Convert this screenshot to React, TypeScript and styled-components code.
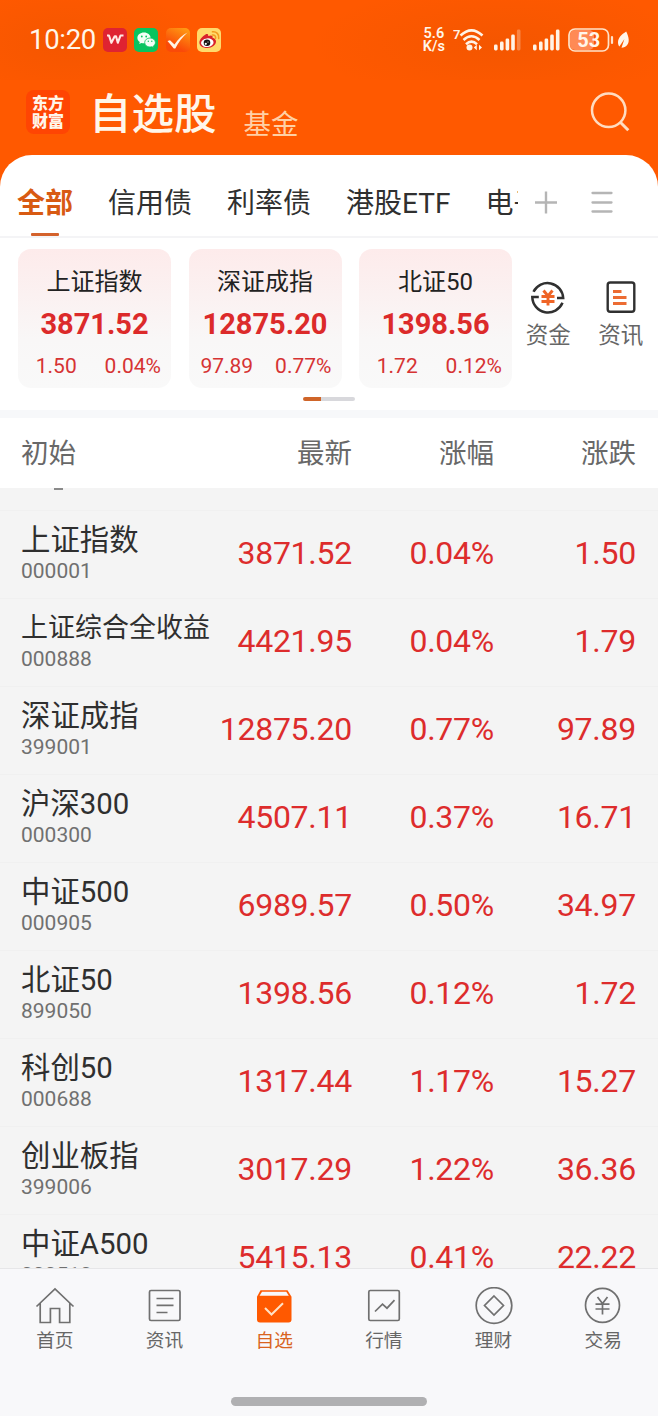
import React from 'react';
import styled, { createGlobalStyle } from 'styled-components';

const GlobalStyle = createGlobalStyle`
  * { box-sizing: border-box; }
  body {
    margin: 0;
    background: #f4f4f4;
    font-family: Roboto, "Noto Sans CJK SC", sans-serif;
    color: #2f2f2f;
  }
  svg { display: block; flex: none; }
`;

const Screen = styled.div`
  width: 658px;
  height: 1416px;
  display: flex;
  flex-direction: column;
  overflow: hidden;
  background: #f4f4f4;
`;

const Top = styled.header`
  height: 155px;
  flex: none;
  background: #ff5900;
  color: #fff6ea;
`;

const StatusBar = styled.div`
  height: 80px;
  display: flex;
  align-items: center;
  padding: 0 28px 0 29px;
  background:
    radial-gradient(ellipse 130px 60px at 70px 44px, rgba(150, 60, 0, 0.1), transparent),
    radial-gradient(ellipse 190px 60px at 500px 44px, rgba(150, 60, 0, 0.1), transparent);
`;

const Clock = styled.span`
  width: 74px;
  font-size: 27.5px;
  line-height: 32px;
  letter-spacing: -0.3px;
`;

const AppIcons = styled.div`
  display: flex;
  gap: 7.4px;
`;

const StatusRight = styled.div`
  display: flex;
  align-items: center;
  margin-left: auto;
`;

const Speed = styled.div`
  font-size: 14.5px;
  font-weight: 600;
  line-height: 13px;
  text-align: center;
  margin-right: 8px;
`;

const TitleBar = styled.div`
  height: 75px;
  display: flex;
  align-items: flex-start;
  padding: 0 26px;
`;

const Brand = styled.div`
  width: 44px;
  height: 44px;
  margin-top: 10px;
  border-radius: 8px;
  background: #ff4503;
  font: 900 16px/18px "Noto Sans CJK SC", sans-serif;
  text-align: center;
  padding-top: 3px;
`;

const PageTitle = styled.h1`
  margin: 12px 0 0 19px;
  font-size: 42.5px;
  line-height: 46px;
  font-weight: 500;
`;

const AltTitle = styled.span`
  margin: 28px auto 0 27px;
  font-size: 27.5px;
  line-height: 34px;
  color: #ffd0a5;
`;

const SearchButton = styled.div`
  margin: 11px 2px 0 0;
`;

const Sheet = styled.section`
  flex: none;
  height: 255px;
  background: #ff5900;
`;

const SheetBody = styled.div`
  height: 255px;
  border-radius: 32px 32px 0 0;
  background: #fff;
  overflow: hidden;
`;

const TabBar = styled.nav`
  height: 83px;
  display: flex;
  padding-left: 17px;
  border-bottom: 2px solid #f4f4f6;
`;

const TabList = styled.div`
  width: 501px;
  display: flex;
  gap: 35px;
  overflow: hidden;
`;

const Tab = styled.div<{ $active?: boolean }>`
  flex: none;
  display: flex;
  flex-direction: column;
  align-items: center;
  padding-top: 31px;
  font-size: 28px;
  line-height: 36px;
  white-space: nowrap;
  font-weight: ${p => (p.$active ? 700 : 400)};
  color: ${p => (p.$active ? '#d85a12' : '#303030')};
`;

const TabMark = styled.i`
  width: 28px;
  height: 3px;
  margin-top: 11px;
  border-radius: 1px;
  background: #d4622c;
`;

const TabTools = styled.div`
  display: flex;
  gap: 33px;
  padding: 36px 0 0 16px;
`;

const Market = styled.div`
  display: flex;
  padding: 11px 0 0 18px;
`;

const Cards = styled.div`
  display: flex;
  gap: 17.5px;
`;

const Card = styled.article`
  width: 153px;
  height: 139px;
  border-radius: 13px;
  background: linear-gradient(#fdebeb, #f9f7f7 65%, #f9f9f9);
  text-align: center;
`;

const CardName = styled.div`
  padding-top: 16px;
  font-size: 24px;
  line-height: 34px;
  color: #222;
`;

const CardPrice = styled.div`
  margin-top: 7.5px;
  font-size: 29px;
  line-height: 34px;
  font-weight: 700;
  color: #dc2a2a;
`;

const CardChange = styled.div`
  display: grid;
  grid-template-columns: 1fr 1fr;
  margin-top: 10.5px;
  font-size: 21px;
  line-height: 30px;
  color: #d63333;
`;

const Shortcuts = styled.div`
  display: flex;
  width: 145px;
  padding-top: 29px;
`;

const Shortcut = styled.div`
  flex: 1;
  display: flex;
  flex-direction: column;
  align-items: center;
  gap: 3px;
  font-size: 22.5px;
  line-height: 32px;
  color: #666;
`;

const Pager = styled.div`
  width: 52px;
  height: 4px;
  margin: 9px auto 0;
  border-radius: 2px;
  background: linear-gradient(90deg, #cf6529 18px, #d8d8dc 18px);
`;

const ColumnHead = styled.div`
  flex: none;
  height: 78px;
  border-top: 8px solid #f7f8fa;
  background: #fff;
  display: grid;
  grid-template-columns: 1fr 140px 142px 142px;
  align-items: center;
  padding: 1px 22px 0 21px;
  font-size: 27.5px;
  line-height: 36px;
  color: #686868;
  text-align: right;
`;

const HeadLeft = styled.span`
  text-align: left;
`;

const List = styled.main`
  flex: none;
  height: 780px;
  overflow: hidden;
`;

const ClippedRow = styled.div`
  height: 23px;
  padding-left: 54px;
  border-bottom: 1px solid #f0f0f0;
`;

const ClippedMark = styled.div`
  width: 9px;
  height: 2px;
  background: #8a8a8a;
`;

const Row = styled.div`
  height: 88px;
  display: grid;
  grid-template-columns: 1fr 140px 142px 142px;
  align-items: center;
  padding: 0 22px 3px 21px;
  border-bottom: 1px solid #f0f0f0;
`;

const Stock = styled.div`
  white-space: nowrap;
`;

const StockName = styled.div<{ $long?: boolean }>`
  font-size: ${p => (p.$long ? 27 : 29.4)}px;
  line-height: 36px;
`;

const StockCode = styled.div`
  font-size: 21px;
  line-height: 26px;
  color: #707070;
`;

const Figure = styled.div`
  font-size: 32px;
  line-height: 38px;
  letter-spacing: -0.25px;
  text-align: right;
  white-space: nowrap;
  color: #dd2c2c;
`;

const Bottom = styled.footer`
  flex: none;
  height: 148px;
  display: flex;
  flex-direction: column;
  background: #f8f8fa;
  border-top: 1px solid #e6e6e8;
`;

const NavItems = styled.div`
  display: flex;
  padding-top: 17.5px;
`;

const NavItem = styled.div<{ $active?: boolean }>`
  flex: 1;
  display: flex;
  flex-direction: column;
  align-items: center;
  font-size: 18.7px;
  line-height: 28px;
  gap: 2px;
  color: ${p => (p.$active ? '#d9641f' : '#666')};
`;

const HomeBar = styled.div`
  width: 196px;
  height: 9px;
  margin: auto auto 10px;
  border-radius: 5px;
  background: #b0b0b2;
`;

const indices = [
  ['上证指数', '3871.52', '1.50', '0.04%'],
  ['深证成指', '12875.20', '97.89', '0.77%'],
  ['北证50', '1398.56', '1.72', '0.12%'],
];

const stocks = [
  ['上证指数', '000001', '3871.52', '0.04%', '1.50'],
  ['上证综合全收益', '000888', '4421.95', '0.04%', '1.79'],
  ['深证成指', '399001', '12875.20', '0.77%', '97.89'],
  ['沪深300', '000300', '4507.11', '0.37%', '16.71'],
  ['中证500', '000905', '6989.57', '0.50%', '34.97'],
  ['北证50', '899050', '1398.56', '0.12%', '1.72'],
  ['科创50', '000688', '1317.44', '1.17%', '15.27'],
  ['创业板指', '399006', '3017.29', '1.22%', '36.36'],
  ['中证A500', '000510', '5415.13', '0.41%', '22.22'],
];

const WpsIcon = () => (
  <svg width="24" height="24" viewBox="0 0 24 24">
    <rect width="24" height="24" rx="5" fill="#df2331" />
    <path d="M4 7.500H6L8.400 14.800 11.700 8.300H13L14.800 14.800 17.500 7.500H20.500" fill="none" stroke="#ffe9e4" strokeWidth="2.100" strokeLinejoin="round" />
  </svg>
);

const WechatIcon = () => (
  <svg width="24" height="24" viewBox="0 0 24 24">
    <rect width="24" height="24" rx="5" fill="#08c45f" />
    <path d="M10 4.500c-3.700 0-6.600 2.400-6.600 5.400 0 1.700.9 3.200 2.400 4.200l-.6 2 2.300-1.200c.8.2 1.600.3 2.500.3 3.700 0 6.600-2.400 6.600-5.300S13.700 4.500 10 4.500Z" fill="#f3fff5" />
    <path d="M16 10c-3 0-5.300 2-5.300 4.500S13 19 16 19c.7 0 1.400-.1 2-.3l1.900 1-.5-1.700c1.200-.8 2-2 2-3.500C21.400 12 19 10 16 10Z" fill="#f3fff5" stroke="#08c45f" strokeWidth=".8" />
    <g fill="#08c45f"><circle cx="7.800" cy="8.500" r=".9" /><circle cx="12.200" cy="8.500" r=".9" /><circle cx="14.300" cy="13.300" r=".7" /><circle cx="17.800" cy="13.300" r=".7" /></g>
  </svg>
);

const CheckAppIcon = () => (
  <svg width="24" height="24" viewBox="0 0 24 24">
    <defs>
      <linearGradient id="checkBg" x1=".8" y1="0" x2=".4" y2=".8">
        <stop offset="0" stopColor="#ff9b13" />
        <stop offset="1" stopColor="#fa4a08" />
      </linearGradient>
    </defs>
    <rect width="24" height="24" rx="5" fill="url(#checkBg)" />
    <path d="M1.500 13 4 12.200 8.500 16.500C12 11 16 7.500 21.500 4.500 16.500 9 12.500 14 9.300 20.500H7.800Z" fill="#fff3e4" />
  </svg>
);

const WeiboIcon = () => (
  <svg width="24" height="24" viewBox="0 0 24 24">
    <rect width="24" height="24" rx="5" fill="#ffda6c" />
    <path d="M8.500 6.500c1.500-.8 3-.6 2.700 1.500 2.600-1 5-.8 4.300 1.700 2 .5 3.500 1.800 3.500 3.900 0 3.500-4 6.400-8.700 6.400S2.400 17.800 2.400 14.500c0-2.900 3.300-6.500 6.100-8Z" fill="#d9222c" />
    <ellipse cx="10.300" cy="14.700" rx="6.300" ry="4.300" fill="#fff" transform="rotate(-6 10.300 14.700)" />
    <circle cx="10" cy="14.800" r="3.300" fill="#1a1413" />
    <circle cx="8.800" cy="15.800" r="1.100" fill="#fff" /><circle cx="11" cy="14" r=".6" fill="#fff" />
    <path d="M15.500 7c2-.3 3.500 1.200 3.100 3.200M15.500 3.800c3.900-.5 6.900 2.500 6.200 6.600" fill="none" stroke="#f39a1f" strokeWidth="1.600" strokeLinecap="round" />
  </svg>
);

const WifiIcon = () => (
  <svg width="34" height="28" viewBox="0 0 34 28">
    <text x="0" y="13" fontSize="13" fontWeight="600" fill="#fff3e6">7</text>
    <g fill="none" stroke="#fff3e6" strokeWidth="2.600">
      <path d="M7.500 9.500Q18.500-.8 29.500 9.500" />
      <path d="M10.500 14Q18.500 6.500 26.500 14" />
      <path d="M13 18.200Q18.500 13.200 24 18.200" />
    </g>
    <circle cx="16.500" cy="21.500" r="3" fill="#fff3e6" />
    <path d="m20.800 21.500 3-2.800v5.600ZM29 21.500l-3-2.800v5.600Z" fill="#fff3e6" />
  </svg>
);

const SignalIcon = ({ weak }: { weak?: boolean }) => (
  <svg width="27" height="22" viewBox="0 0 27 22">
    {[[0, 6], [6, 9], [11.600, 12], [17.200, 16], [22.900, 21]].map(([x, h], i) => (
      <rect key={i} x={x} y={21.500 - h} width="3.600" height={h} rx="1.400" fill="#fff3e6" opacity={weak && i === 4 ? 0.3 : 1} />
    ))}
  </svg>
);

const BatteryIcon = () => (
  <svg width="46" height="24" viewBox="0 0 46 24">
    <rect x="2" y="2" width="24" height="20" rx="5" fill="#ff8a55" />
    <rect x="1" y="1" width="39.500" height="22" rx="6" fill="none" stroke="#ffe3c9" strokeWidth="1.700" />
    <path d="M44 9v6" stroke="#ffe3c9" strokeWidth="2.200" strokeLinecap="round" />
    <text x="20.700" y="19" fontSize="20" fontWeight="700" textAnchor="middle" fill="#fff6ea">53</text>
  </svg>
);

const LeafIcon = () => (
  <svg width="13" height="20" viewBox="0 0 13 20">
    <path d="M9.200 1.500C4.500 4.500 1 7.800 1 12.300c0 1.900.5 3.200 1.400 4.300L7.400 9 4.500 17.700C9.300 17.500 12 14 11.700 9.500 11.500 6.500 10.300 3.800 9.200 1.500Z" fill="#fff6ea" />
  </svg>
);

const SearchIcon = () => (
  <svg width="42" height="42" viewBox="0 0 42 42" fill="none" stroke="#ffdcc0" strokeWidth="2.500">
    <circle cx="20.700" cy="19.300" r="16.700" />
    <path d="m32.300 31.300 8 8" strokeWidth="3" />
  </svg>
);

const PlusIcon = () => (
  <svg width="24" height="24" viewBox="0 0 24 24" stroke="#b5b5b5" strokeWidth="2.400">
    <path d="M1 11.500h22M12 .5v22" />
  </svg>
);

const MenuIcon = () => (
  <svg width="22" height="24" viewBox="0 0 22 24" stroke="#b5b5b5" strokeWidth="2.300" strokeLinecap="round">
    <path d="M1.500 2h19M1.500 11.500h19M1.500 20.500h19" />
  </svg>
);

const FundsIcon = () => (
  <svg width="38" height="38" viewBox="0 0 38 38" fill="none" stroke="#303030" strokeWidth="2.500">
    <path d="M4.500 13.700A15.700 15.700 0 0 1 34.200 20H28" />
    <path d="M33.500 24.800A15.700 15.700 0 0 1 3.300 19H9.800" />
    <path d="m14.500 12.500 4.500 5.500 4.500-5.500M12.500 18.500h13M12.500 23.500h13M19 18v9.500" stroke="#ef6426" strokeWidth="2.900" />
  </svg>
);

const NewsIcon = () => (
  <svg width="38" height="38" viewBox="0 0 38 38" fill="none" stroke="#303030" strokeWidth="2.400">
    <rect x="5.700" y="4.500" width="26.600" height="29.300" rx="2.500" />
    <path d="M11 13.500h8.500M11 19.500h13.500M11 25.500h13.500" stroke="#ec6c33" strokeWidth="2.800" />
  </svg>
);

const navIcons: Record<string, React.ReactNode> = {
  首页: <path d="M1.500 19.500 20 2l18.500 17.500M5.200 16.500V35.500H15.400V21.500H24.600V35.500H34.800V16.500" />,
  资讯: <g><rect x="4.500" y="3.500" width="30.500" height="30" rx="1.500" /><path d="M11.500 11.500h17M11.500 18.300h17M11.500 25.500h11" /></g>,
  自选: (
    <g stroke="none">
      <path d="m6.500 3.300h27l4 6.500v22.700a3 3 0 0 1-3 3H6a3 3 0 0 1-3-3V9.800Z" fill="#ff5900" />
      <path d="M8 4.800h24.300l2.500 4H5.500Z" fill="#f8f8fa" />
      <path d="m11 21 6.500 6.500L29 16.300" fill="none" stroke="#ffe2c6" strokeWidth="2" />
    </g>
  ),
  行情: <g><rect x="4.800" y="3.500" width="30.500" height="30" rx="1.500" /><path d="m11 24.500 7.500-7.300 4.500 4 7.500-8" /></g>,
  理财: <g><circle cx="20" cy="18.500" r="17.800" /><path d="m20 9 9.500 9.500L20 28l-9.500-9.500Z" /></g>,
  交易: <g><circle cx="19.500" cy="18.300" r="17" /><path d="m14.500 10 5 6.500 5-6.500M12.500 17.200h14M12.500 22h14M19.500 16.500v11" /></g>,
};

export default function App() {
  return (
    <Screen>
      <GlobalStyle />
      <Top>
        <StatusBar>
          <Clock>10:20</Clock>
          <AppIcons>
            <WpsIcon />
            <WechatIcon />
            <CheckAppIcon />
            <WeiboIcon />
          </AppIcons>
          <StatusRight>
            <Speed>5.6<br />K/s</Speed>
            <WifiIcon />
            <svg width="7" height="1" />
            <SignalIcon weak />
            <svg width="12" height="1" />
            <SignalIcon />
            <svg width="8" height="1" />
            <BatteryIcon />
            <svg width="3" height="1" />
            <LeafIcon />
          </StatusRight>
        </StatusBar>
        <TitleBar>
          <Brand>东方<br />财富</Brand>
          <PageTitle>自选股</PageTitle>
          <AltTitle>基金</AltTitle>
          <SearchButton><SearchIcon /></SearchButton>
        </TitleBar>
      </Top>
      <Sheet>
        <SheetBody>
          <TabBar>
            <TabList>
              <Tab $active>全部<TabMark /></Tab>
              <Tab>信用债</Tab>
              <Tab>利率债</Tab>
              <Tab>港股ETF</Tab>
              <Tab>电子</Tab>
            </TabList>
            <TabTools>
              <PlusIcon />
              <MenuIcon />
            </TabTools>
          </TabBar>
          <Market>
            <Cards>
              {indices.map(([name, price, diff, pct]) => (
                <Card key={name}>
                  <CardName>{name}</CardName>
                  <CardPrice>{price}</CardPrice>
                  <CardChange><span>{diff}</span><span>{pct}</span></CardChange>
                </Card>
              ))}
            </Cards>
            <Shortcuts>
              <Shortcut><FundsIcon />资金</Shortcut>
              <Shortcut><NewsIcon />资讯</Shortcut>
            </Shortcuts>
          </Market>
          <Pager />
        </SheetBody>
      </Sheet>
      <ColumnHead>
        <HeadLeft>初始</HeadLeft>
        <span>最新</span>
        <span>涨幅</span>
        <span>涨跌</span>
      </ColumnHead>
      <List>
        <ClippedRow><ClippedMark /></ClippedRow>
        {stocks.map(([name, code, price, pct, diff]) => (
          <Row key={code}>
            <Stock>
              <StockName $long={name.length > 6}>{name}</StockName>
              <StockCode>{code}</StockCode>
            </Stock>
            <Figure>{price}</Figure>
            <Figure>{pct}</Figure>
            <Figure>{diff}</Figure>
          </Row>
        ))}
      </List>
      <Bottom>
        <NavItems>
          {Object.entries(navIcons).map(([label, icon]) => (
            <NavItem key={label} $active={label === '自选'}>
              <svg width="40" height="38" viewBox="0 0 40 38" fill="none" stroke="#707070" strokeWidth="1.700">{icon}</svg>
              {label}
            </NavItem>
          ))}
        </NavItems>
        <HomeBar />
      </Bottom>
    </Screen>
  );
}
